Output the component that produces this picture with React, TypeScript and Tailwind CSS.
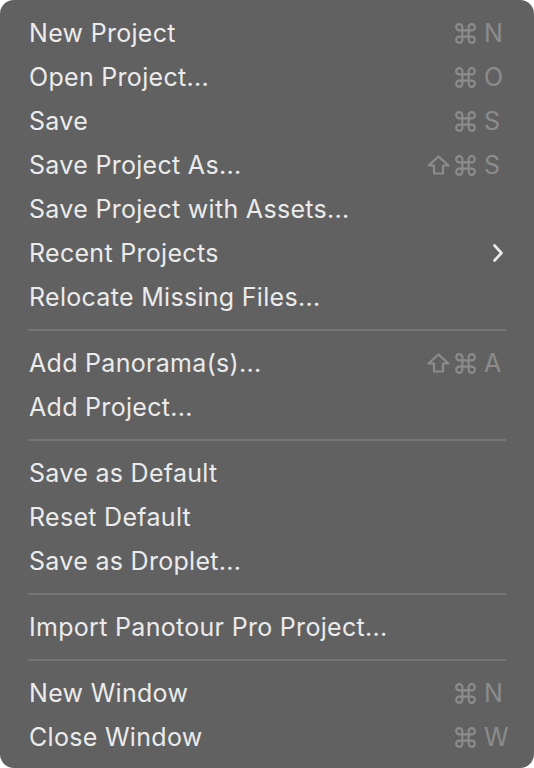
import React from "react";

type Item =
  | { type: "sep" }
  | { type: "item"; label: string; shift?: boolean; key?: string; sub?: boolean };

const items: Item[] = [
  { type: "item", label: "New Project", key: "N" },
  { type: "item", label: "Open Project...", key: "O" },
  { type: "item", label: "Save", key: "S" },
  { type: "item", label: "Save Project As...", shift: true, key: "S" },
  { type: "item", label: "Save Project with Assets..." },
  { type: "item", label: "Recent Projects", sub: true },
  { type: "item", label: "Relocate Missing Files..." },
  { type: "sep" },
  { type: "item", label: "Add Panorama(s)...", shift: true, key: "A" },
  { type: "item", label: "Add Project..." },
  { type: "sep" },
  { type: "item", label: "Save as Default" },
  { type: "item", label: "Reset Default" },
  { type: "item", label: "Save as Droplet..." },
  { type: "sep" },
  { type: "item", label: "Import Panotour Pro Project..." },
  { type: "sep" },
  { type: "item", label: "New Window", key: "N" },
  { type: "item", label: "Close Window", key: "W" },
];

function Cmd() {
  return (
    <svg width="25" height="25" viewBox="0 0 24 24" fill="none" stroke="#8c8c8c" strokeWidth="2" strokeLinecap="round" strokeLinejoin="round">
      <path d="M15 6v12a3 3 0 1 0 3-3H6a3 3 0 1 0 3 3V6a3 3 0 1 0-3 3h12a3 3 0 1 0-3-3" />
    </svg>
  );
}

function Shift() {
  return (
    <svg width="23" height="20" viewBox="0 0 23 20" fill="none" stroke="#8c8c8c" strokeWidth="2.2" strokeLinejoin="round">
      <path d="M11.5 1.5 L21.5 10.5 H16 V18.5 H7 V10.5 H1.5 Z" />
    </svg>
  );
}

export default function App() {
  return (
    <div className="w-[534px] h-[768px] bg-white" style={{ fontFamily: "Inter, 'Noto Sans', sans-serif" }}>
      <div className="w-full h-full rounded-[14px] bg-[#616161] pt-[11px] pl-[28px] pr-[24px]">
        {items.map((it, i) =>
          it.type === "sep" ? (
            <div key={i} className="h-[22px] flex items-center pr-[4px]">
              <div className="h-[2px] w-full bg-[#757575]" />
            </div>
          ) : (
            <div key={i} className="h-[44px] flex items-center justify-between">
              <span className="text-[25px] text-[#ebebeb] tracking-[0.3px] leading-none pl-[1px]">{it.label}</span>
              {it.sub ? (
                <svg width="12" height="20" viewBox="0 0 12 20" fill="none" stroke="#ececec" strokeWidth="2.6" strokeLinecap="round" strokeLinejoin="round" className="mr-[6px]">
                  <path d="M2.5 2.5 L9.5 10 L2.5 17.5" />
                </svg>
              ) : it.key ? (
                <div className="flex items-center">
                  {it.shift && <div className="mr-[3px] flex"><Shift /></div>}
                  <div className="flex"><Cmd /></div>
                  <span className="ml-[6px] w-[26px] text-[25px] text-[#8c8c8c] leading-none">{it.key}</span>
                </div>
              ) : null}
            </div>
          )
        )}
      </div>
    </div>
  );
}
